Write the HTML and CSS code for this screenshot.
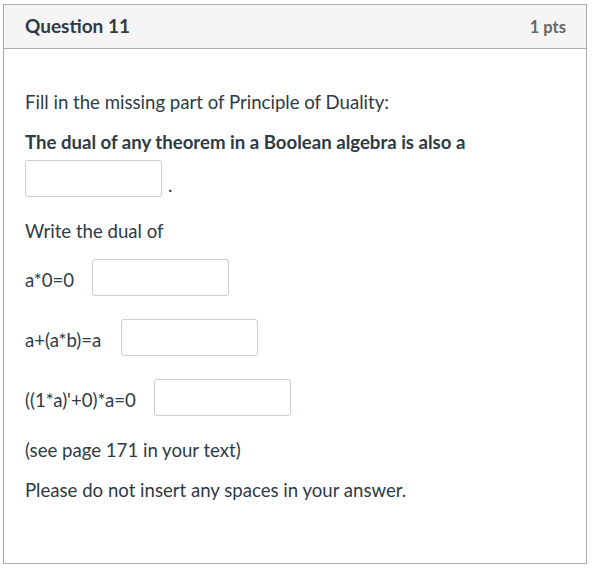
FILE: index.html
```html
<!DOCTYPE html>
<html>
<head>
<meta charset="utf-8">
<link rel="stylesheet" href="styles.css">
</head>
<body>
<div class="question">
  <div class="q-header">
    <span class="q-title">Question 11</span>
    <span class="q-points">1 pts</span>
  </div>
  <div class="q-body">
    <p class="line first">Fill in the missing part of Principle of Duality:</p>
    <p class="line bold">The dual of any theorem in a Boolean algebra is also a</p>
    <div class="row row-first">
      <span class="answer"></span><span class="label period">.</span>
    </div>
    <p class="line write">Write the dual of</p>
    <div class="row r2">
      <span class="label">a*0=0</span><span class="answer"></span>
    </div>
    <div class="row r3">
      <span class="label">a+(a*b)=a</span><span class="answer"></span>
    </div>
    <div class="row r4">
      <span class="label">((1*a)'+0)*a=0</span><span class="answer"></span>
    </div>
    <p class="line see">(see page 171 in your text)</p>
    <p class="line please">Please do not insert any spaces in your answer.</p>
  </div>
</div>
</body>
</html>
```
FILE: styles.css
```css
html, body {
  margin: 0;
  padding: 0;
  background: #ffffff;
}
body {
  font-family: Lato, "Liberation Sans", sans-serif;
  color: #2d3b45;
}
.question {
  margin: 4px 0 0 3px;
  width: 584px;
  height: 560px;
  box-sizing: border-box;
  border: 1px solid #acacac;
}
.q-header {
  height: 44px;
  box-sizing: border-box;
  background: #f5f5f5;
  border-bottom: 1px solid #acacac;
  display: flex;
  justify-content: space-between;
  align-items: center;
  padding: 0 20px 0 21px;
}
.q-title {
  font-size: 19px;
  font-weight: 700;
  color: #2d3b45;
  margin-top: -3px;
}
.q-points {
  font-size: 16.5px;
  font-weight: 700;
  color: #666666;
}
.q-body {
  padding: 0 21px;
}
.line {
  margin: 0;
  font-size: 18.6px;
  line-height: 24px;
}
.first { margin-top: 41px; }
.bold { margin-top: 16px; font-weight: 700; }
.row {
  display: flex;
  align-items: center;
  font-size: 18.6px;
  line-height: 24px;
}
.row-first { margin-top: 5px; }
.r2 { margin-top: 16px; gap: 18px; }
.r3 { margin-top: 23px; gap: 20px; }
.r4 { margin-top: 23px; gap: 18px; }
.label {
  margin-top: 5px;
}
.period {
  margin-left: 6px;
  margin-top: 14px;
}
.answer {
  display: block;
  width: 137px;
  height: 37px;
  box-sizing: border-box;
  border: 1px solid #c7cdd1;
  border-radius: 3px;
  background: #fff;
}
.write { margin-top: 22px; }
.see { margin-top: 22px; }
.please { margin-top: 16px; }
```
